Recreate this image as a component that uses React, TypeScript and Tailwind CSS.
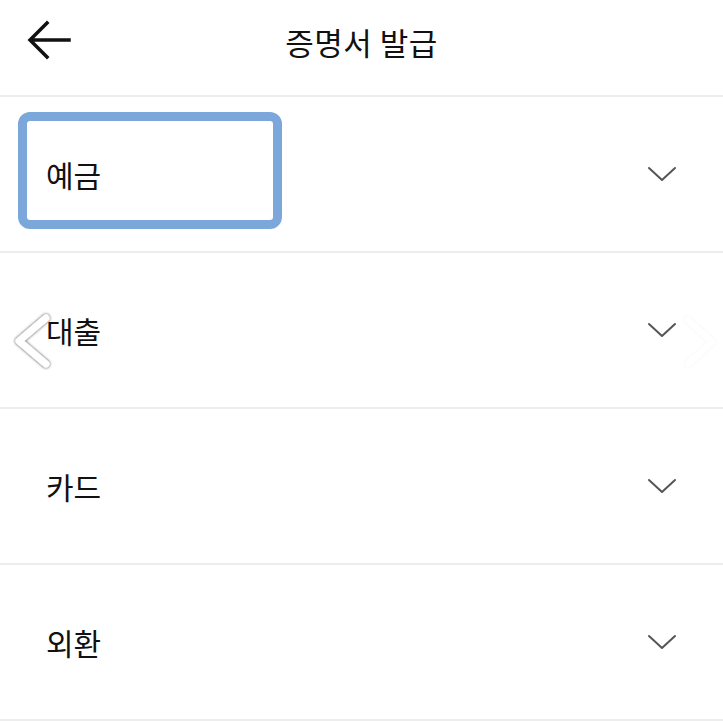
import React from "react";

const items = ["예금", "대출", "카드", "외환"];

function Chevron() {
    return (
        <svg width="30" height="18" viewBox="0 0 30 18" fill="none">
            <polyline points="2,3 15,15 28,3" stroke="#555555" strokeWidth="2" strokeLinecap="round" strokeLinejoin="round" />
        </svg>
    );
}

export default function App() {
    return (
        <div
            className="relative w-[723px] h-[722px] overflow-hidden bg-white text-[#111111]"
            style={{ fontFamily: '"Noto Sans CJK KR", "Noto Sans", sans-serif' }}
        >
            {/* header */}
            <div className="relative flex h-[97px] items-center justify-center border-b-2 border-[#ededed] pb-[12px]">
                <button className="absolute left-[26px] top-[20px] p-0">
                    <svg width="48" height="40" viewBox="0 0 48 40" fill="none">
                        <path d="M43 20H5M21 3L4 20L21 37" stroke="#111111" strokeWidth="3.5" strokeLinecap="square" />
                    </svg>
                </button>
                <div className="text-[31px] leading-none font-normal tracking-[0.5px]">증명서 발급</div>
            </div>

            {/* list */}
            {items.map((label, i) => (
                <div key={label} className="relative flex h-[156px] items-center justify-between border-b-2 border-[#ededed] pl-[46px] pr-[46px]">
                    <span className="text-[30px] leading-none">{label}</span>
                    <Chevron />
                    {i === 0 && (
                        <div className="pointer-events-none absolute left-[18px] top-[15px] h-[117px] w-[264px] rounded-[12px] border-[9px] border-[#7ba7da]" />
                    )}
                </div>
            ))}

            {/* carousel arrows overlay */}
            <svg className="absolute left-[8px] top-[308px]" width="50" height="66" viewBox="0 0 50 66" fill="none">
                <defs>
                    <filter id="sh" x="-50%" y="-50%" width="200%" height="200%">
                        <feDropShadow dx="0" dy="0" stdDeviation="1.6" floodColor="#000000" floodOpacity="0.85" />
                    </filter>
                </defs>
                <polyline points="38,10 11,33 38,56" stroke="#ffffff" strokeWidth="7" strokeLinecap="round" strokeLinejoin="round" filter="url(#sh)" />
            </svg>
            <svg className="absolute left-[676px] top-[312px]" width="44" height="60" viewBox="0 0 44 60" fill="none">
                <polyline points="12,8 36,30 12,52" stroke="#ffffff" strokeWidth="7" strokeLinecap="round" strokeLinejoin="round" style={{ filter: "drop-shadow(0 0 1px rgba(0,0,0,0.06))" }} />
            </svg>
        </div>
    );
}
